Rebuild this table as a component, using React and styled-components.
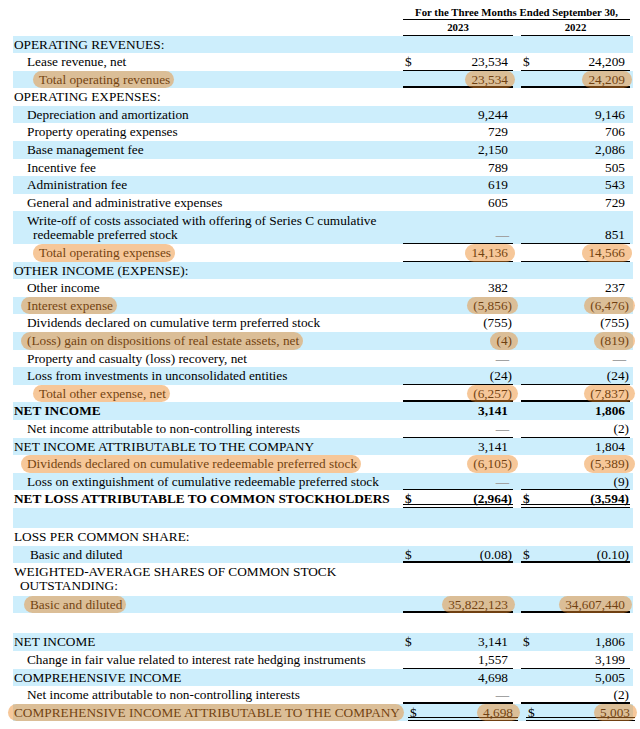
import styled, { createGlobalStyle, css } from 'styled-components';

const GlobalStyle = createGlobalStyle`
  html, body {
    margin: 0;
    padding: 0;
    background: #fff;
  }
  body {
    font-family: "Liberation Serif", "Times New Roman", serif;
    color: #000;
  }
`;

const BAND = '#cdeefc';
const ROW_H = 17.6;
const WRAP_H = 32.6;
const BLANK_H = 20;

const rules = {
  thin: 'linear-gradient(#000, #000) left bottom / 100% 1px no-repeat',
  thick: 'linear-gradient(#000, #000) left bottom / 100% 2px no-repeat',
  double:
    'linear-gradient(#000, #000) left bottom / 100% 1px no-repeat, linear-gradient(#000, #000) left calc(100% - 3px) / 100% 1px no-repeat',
};

const highlight = css`
  &::after {
    content: '';
    position: absolute;
    top: 0;
    bottom: 0;
    border-radius: 9px;
    background: rgba(236, 136, 38, 0.47);
    pointer-events: none;
  }
`;

const Page = styled.div`
  width: 620px;
  padding: 5px 7px 7px 13px;
`;

const Head = styled.div`
  display: grid;
  grid-template-columns: 1fr 110px 109px;
  column-gap: 8px;
  padding-right: 3px;
  font-size: 10.8px;
  font-weight: bold;
  text-align: center;
`;

const Period = styled.div`
  grid-column: 2 / 4;
  line-height: 14px;
  border-bottom: 1.5px solid #000;
`;

const Year = styled.div`
  line-height: 14.5px;
  border-bottom: 1px solid #000;
`;

const Body = styled.div`
  display: flex;
  flex-direction: column;
`;

const Row = styled.div`
  display: grid;
  grid-template-columns: 1fr 110px 109px;
  column-gap: 8px;
  padding-right: 3px;
  height: ${p => (p.$blank ? BLANK_H : p.$wrap ? WRAP_H : ROW_H)}px;
  font-size: 13.3px;
  line-height: ${ROW_H}px;
  font-weight: ${p => (p.$bold ? 'bold' : 'normal')};

  &:nth-child(odd) {
    background: ${BAND};
  }
`;

const Label = styled.div`
  padding-left: ${p => p.$indent + 6}px;
  text-indent: -6px;
  white-space: nowrap;
  ${p =>
    p.$wrap &&
    css`
      line-height: 14px;
      padding-top: 2.3px;
    `}
`;

const Mark = styled.span`
  position: relative;
  display: inline-block;
  text-indent: 0;
  ${highlight}
  &::after {
    left: -6px;
    right: -4px;
  }
`;

const Value = styled.div`
  display: flex;
  align-items: flex-end;
  justify-content: space-between;
  white-space: nowrap;
  background: ${p => rules[p.$rule] || 'none'};
`;

const Dollar = styled.span`
  padding-left: 2px;
`;

const Amount = styled.span`
  position: relative;
  margin-left: auto;
  padding-right: ${p => (p.$neg ? 1 : 5)}px;
  ${p =>
    p.$hl &&
    css`
      ${highlight}
      &::after {
        left: -6px;
        right: ${p.$neg ? -5 : -2}px;
      }
    `}
`;

const Nil = styled.span`
  margin-left: auto;
  padding-right: 4px;
  color: #a2a2a2;
  font-weight: bold;
`;

const rows = [
  { label: 'OPERATING REVENUES:', indent: 1 },
  { label: 'Lease revenue, net', indent: 14, values: ['23,534', '24,209'], dollar: true, rule: 'thin' },
  { label: 'Total operating revenues', indent: 26, values: ['23,534', '24,209'], hl: true, rule: 'thick' },
  { label: 'OPERATING EXPENSES:', indent: 1 },
  { label: 'Depreciation and amortization', indent: 14, values: ['9,244', '9,146'] },
  { label: 'Property operating expenses', indent: 14, values: ['729', '706'] },
  { label: 'Base management fee', indent: 14, values: ['2,150', '2,086'] },
  { label: 'Incentive fee', indent: 14, values: ['789', '505'] },
  { label: 'Administration fee', indent: 14, values: ['619', '543'] },
  { label: 'General and administrative expenses', indent: 14, values: ['605', '729'] },
  {
    label: ['Write-off of costs associated with offering of Series C cumulative', 'redeemable preferred stock'],
    indent: 14,
    values: ['—', '851'],
    rule: 'thin',
  },
  { label: 'Total operating expenses', indent: 26, values: ['14,136', '14,566'], hl: true, rule: 'thin' },
  { label: 'OTHER INCOME (EXPENSE):', indent: 1 },
  { label: 'Other income', indent: 14, values: ['382', '237'] },
  { label: 'Interest expense', indent: 14, values: ['(5,856)', '(6,476)'], hl: true },
  { label: 'Dividends declared on cumulative term preferred stock', indent: 14, values: ['(755)', '(755)'] },
  { label: '(Loss) gain on dispositions of real estate assets, net', indent: 14, values: ['(4)', '(819)'], hl: true },
  { label: 'Property and casualty (loss) recovery, net', indent: 14, values: ['—', '—'] },
  { label: 'Loss from investments in unconsolidated entities', indent: 14, values: ['(24)', '(24)'], rule: 'thin' },
  { label: 'Total other expense, net', indent: 26, values: ['(6,257)', '(7,837)'], hl: true, rule: 'thick' },
  { label: 'NET INCOME', indent: 1, values: ['3,141', '1,806'], bold: true },
  { label: 'Net income attributable to non-controlling interests', indent: 14, values: ['—', '(2)'], rule: 'thin' },
  { label: 'NET INCOME ATTRIBUTABLE TO THE COMPANY', indent: 1, values: ['3,141', '1,804'] },
  {
    label: 'Dividends declared on cumulative redeemable preferred stock',
    indent: 14,
    values: ['(6,105)', '(5,389)'],
    hl: true,
  },
  {
    label: 'Loss on extinguishment of cumulative redeemable preferred stock',
    indent: 14,
    values: ['—', '(9)'],
    rule: 'thin',
  },
  {
    label: 'NET LOSS ATTRIBUTABLE TO COMMON STOCKHOLDERS',
    indent: 1,
    values: ['(2,964)', '(3,594)'],
    dollar: true,
    bold: true,
    rule: 'double',
  },
  { blank: true },
  { label: 'LOSS PER COMMON SHARE:', indent: 1 },
  { label: 'Basic and diluted', indent: 17, values: ['(0.08)', '(0.10)'], dollar: true, rule: 'thick' },
  { label: ['WEIGHTED-AVERAGE SHARES OF COMMON STOCK', 'OUTSTANDING:'], indent: 1 },
  { label: 'Basic and diluted', indent: 17, values: ['35,822,123', '34,607,440'], hl: true, rule: 'thick' },
  { blank: true },
  { label: 'NET INCOME', indent: 1, values: ['3,141', '1,806'], dollar: true },
  {
    label: 'Change in fair value related to interest rate hedging instruments',
    indent: 14,
    values: ['1,557', '3,199'],
    rule: 'thin',
  },
  { label: 'COMPREHENSIVE INCOME', indent: 1, values: ['4,698', '5,005'] },
  { label: 'Net income attributable to non-controlling interests', indent: 14, values: ['—', '(2)'], rule: 'thick' },
  {
    label: 'COMPREHENSIVE INCOME ATTRIBUTABLE TO THE COMPANY',
    indent: 1,
    values: ['4,698', '5,003'],
    dollar: true,
    hl: true,
    rule: 'double',
  },
];

const RowLabel = ({ row }) => {
  const wrap = Array.isArray(row.label);
  const text = wrap ? (
    <>
      {row.label[0]}
      <br />
      {row.label[1]}
    </>
  ) : (
    row.label
  );
  return (
    <Label $indent={row.indent} $wrap={wrap}>
      {row.hl ? <Mark>{text}</Mark> : text}
    </Label>
  );
};

const Cell = ({ value, row }) => {
  const neg = value.startsWith('(');
  return (
    <Value $rule={row.rule}>
      {row.dollar && <Dollar>$</Dollar>}
      {value === '—' ? (
        <Nil>—</Nil>
      ) : (
        <Amount $neg={neg} $hl={row.hl}>
          {value}
        </Amount>
      )}
    </Value>
  );
};

export default function App() {
  return (
    <>
      <GlobalStyle />
      <Page>
        <Head>
          <div />
          <Period>For the Three Months Ended September 30,</Period>
          <div />
          <Year>2023</Year>
          <Year>2022</Year>
        </Head>
        <Body>
          {rows.map((row, i) =>
            row.blank ? (
              <Row key={i} $blank />
            ) : (
              <Row key={i} $bold={row.bold} $wrap={Array.isArray(row.label)}>
                <RowLabel row={row} />
                {row.values ? (
                  row.values.map((v, j) => <Cell key={j} value={v} row={row} />)
                ) : (
                  <>
                    <Value />
                    <Value />
                  </>
                )}
              </Row>
            )
          )}
        </Body>
      </Page>
    </>
  );
}
